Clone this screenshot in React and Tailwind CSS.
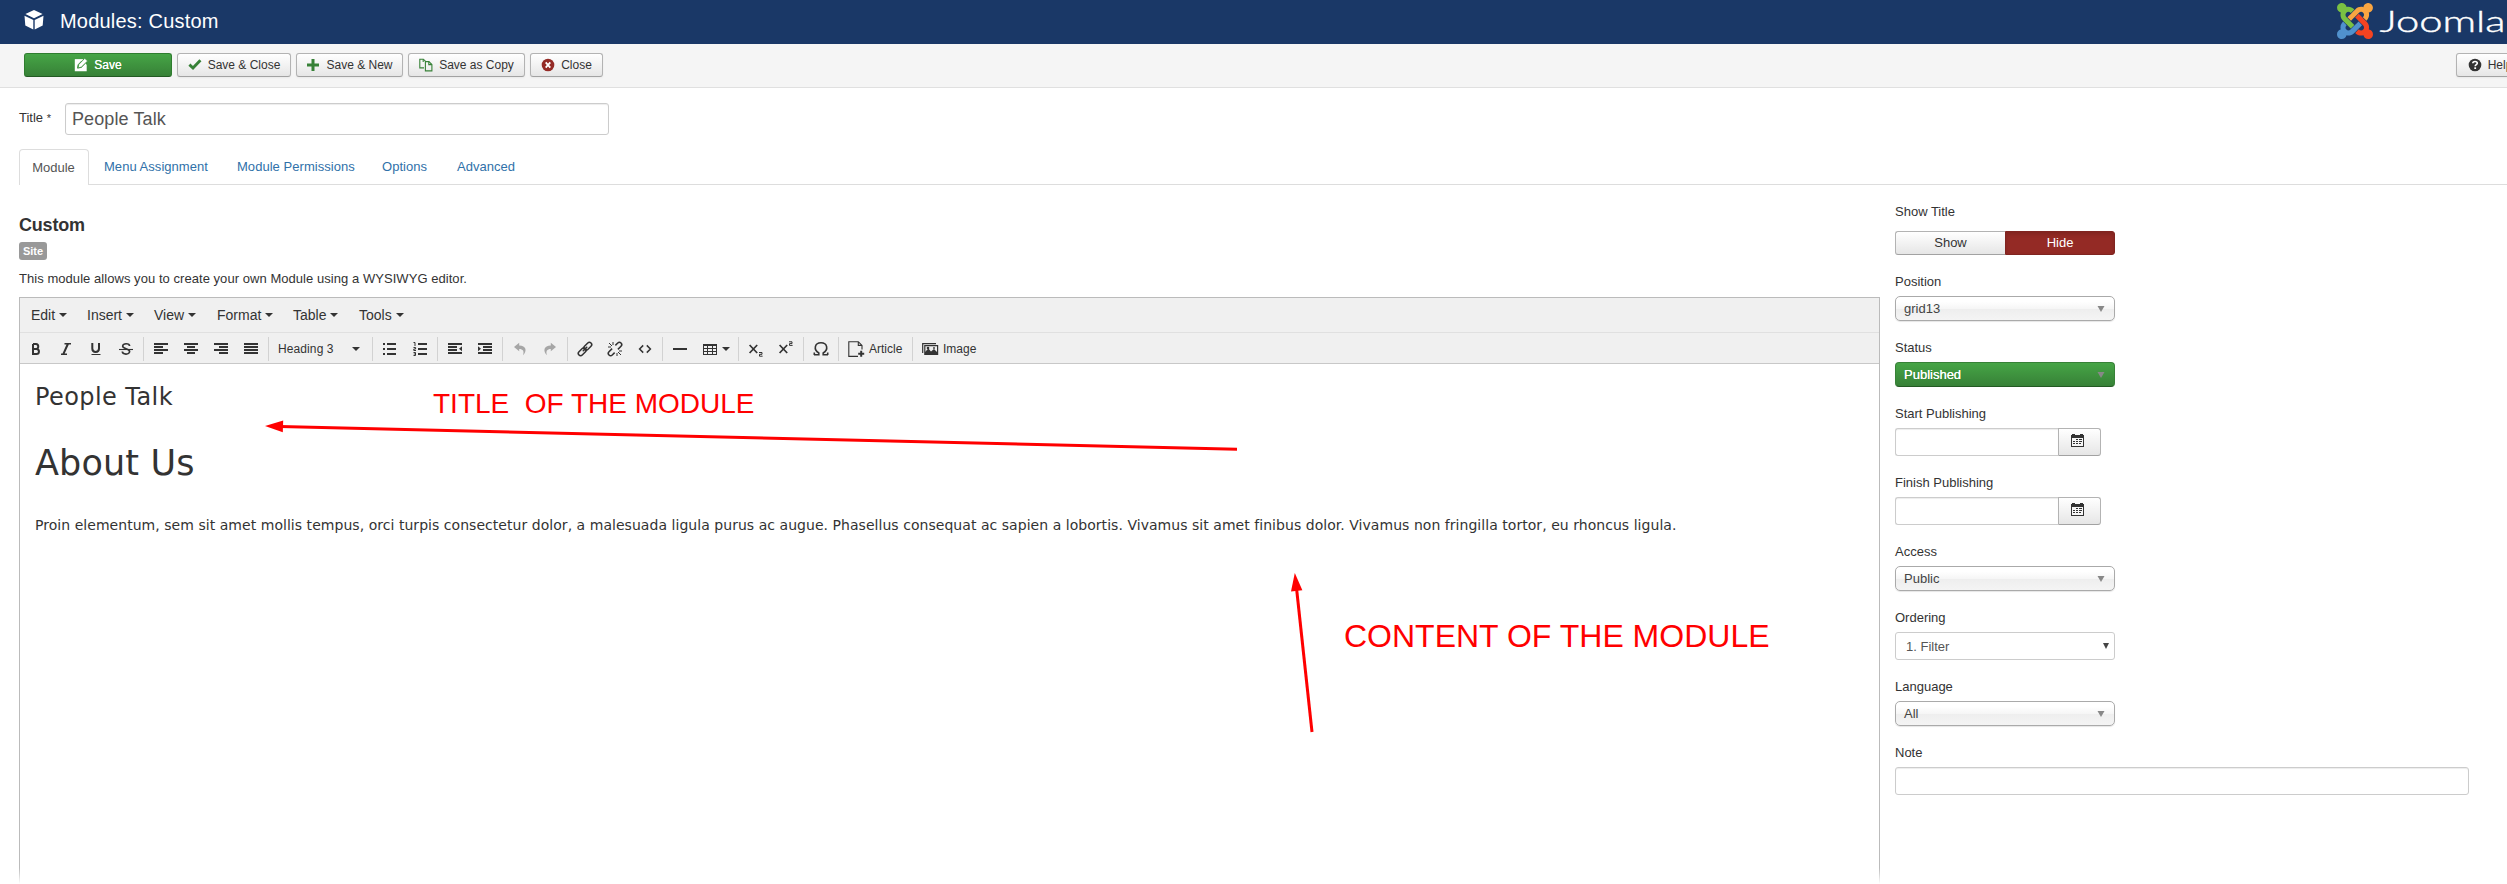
import React from "react";

/* ---------- icons ---------- */

const Cube = () => (
  <svg width="20" height="20" viewBox="0 0 20 20" fill="#fff">
    <path d="M10 0 L18.6 3.9 L10 8.2 L1.4 3.9 Z M0.5 5.8 L9.3 10 V19.6 L1.3 15.6 Z M19.5 5.8 L10.7 10 V19.6 L18.7 15.6 Z" />
  </svg>
);

const JoomlaMark = () => (
  <svg width="36" height="36" viewBox="0 32 448 448">
    <path fill="#7ac143" d="M.6 92.1C.6 58.8 27.4 32 60.4 32c30 0 54.5 21.9 59.2 50.2 32.6-7.6 67.1.6 96.5 30l-44.3 44.3c-20.5-20.5-42.6-16.3-55.4-3.5-14.3 14.3-14.3 37.9 0 52.2l99.5 99.5-44 44.3c-87.7-87.2-49.7-49.7-99.8-99.7-26.8-26.5-35-64.8-24.8-98.9C20.4 144.6.6 120.7.6 92.1z" />
    <path fill="#f9a541" d="M130.1 208.5l44.3 44.3c10-10 89.7-89.7 99.7-99.8 14.3-14.3 37.6-14.3 51.9 0 12.8 12.8 17 35-3.5 55.4l44 44.3c31.2-31.2 38.5-67.6 28.9-101.2 29.2-4.1 51.9-29.2 51.9-59.5 0-33.2-26.8-60.1-59.8-60.1-30.3 0-55.4 22.5-59.5 51.6-33.8-9.9-71.7-1.5-98.3 25.1-18.3 19.1-71.1 71.5-99.6 99.9z" />
    <path fill="#f44321" d="M396.4 360.7c8.2-32.7-.9-68.5-26.3-93.9-11.8-12.2 5 4.7-99.5-99.7l-44.3 44.3 99.7 99.7c14.3 14.3 14.3 37.6 0 51.9-12.8 12.8-35 17-55.4-3.5l-44 44.3c27.6 30.2 68 38.8 102.7 28 5.5 27.4 29.7 48.1 58.9 48.1 33 0 59.8-26.8 59.8-60.1 0-30.2-22.5-55-51.6-59.1z" />
    <path fill="#5091cd" d="M312.1 307.6l-44-44.3c-87 86.4-50.4 50.4-99.7 99.8-14.3 14.3-37.6 14.3-51.9 0-13.1-13.4-16.9-35.3 3.2-55.4l-44-44.3c-30.2 30.2-38 65.2-29.5 98.3-26.7 6-46.2 29.9-46.2 58.2C0 453.2 26.8 480 59.8 480c28.6 0 52.5-19.8 58.6-46.7 32.7 8.2 68.5-.6 94.2-26 32.1-32 12.2-12.4 99.5-99.7z" />
  </svg>
);

const SaveIcon = () => (
  <svg width="14" height="14" viewBox="0 0 14 14">
    <path fill="none" stroke="#fff" strokeWidth="1.4" d="M9 2 H1.5 V12.5 H12 V6.5" />
    <path fill="#fff" d="M1 1.6 H8.6 L3.6 6.8 L3 10.6 L7 10 L12 5 V13 H1 Z" />
    <path fill="#fff" stroke="#3e933e" strokeWidth="0.8" d="M10.8 0.3 L13.6 3 L7.4 9.1 L4.1 9.9 L4.8 6.4 Z" />
  </svg>
);

const CheckIcon = () => (
  <svg width="14" height="14" viewBox="0 0 14 14">
    <path d="M1.4 6.6 L5 10 L12.4 2.2" fill="none" stroke="#378137" strokeWidth="2.9" />
  </svg>
);

const PlusIcon = () => (
  <svg width="14" height="14" viewBox="0 0 14 14">
    <path d="M7 1 V13 M1 7 H13" stroke="#378137" strokeWidth="3" />
  </svg>
);

const CopyIcon = () => (
  <svg width="14" height="14" viewBox="0 0 14 14" fill="none" stroke="#378137" strokeWidth="1.1">
    <path d="M5 9.9 H0.8 V1.2 H4.4 L6.6 3.4" />
    <path d="M4.2 1.2 V4 M9.8 3.6 V6.6 H12.9" />
    <path d="M6.4 3.6 H9.9 L12.9 6.6 V12.9 H6.4 Z" />
  </svg>
);

const CancelIcon = () => (
  <svg width="14" height="14" viewBox="0 0 14 14">
    <circle cx="7" cy="7" r="6.3" fill="#942a25" />
    <path d="M4.7 4.4 L9.3 9.6 M9.3 4.4 L4.7 9.6" stroke="#fff" strokeWidth="1.8" />
  </svg>
);

const HelpIcon = () => (
  <svg width="14" height="14" viewBox="0 0 14 14">
    <circle cx="7" cy="7" r="6.3" fill="#333" />
    <path d="M4.8 5.3 C4.8 2.9 9.3 2.9 9.3 5.3 C9.3 6.7 7.2 6.6 7.2 8.3" fill="none" stroke="#fff" strokeWidth="1.6" />
    <rect x="6.3" y="9.3" width="1.8" height="1.7" fill="#fff" />
  </svg>
);

const CalendarIcon = () => (
  <svg width="13" height="13" viewBox="0 0 13 13" shapeRendering="crispEdges">
    <path fill="#333" d="M0 1 H1 V0 H4 V1 H9 V0 H12 V1 H13 V13 H0 Z" />
    <path fill="#f6f6f6" d="M1 4 H12 V12 H1 Z" />
    <path fill="#333" d="M5 5h2v1H5z M8 5h2v1H8z M10 5h1v1h-1z M2 7h2v1H2z M5 7h2v1H5z M8 7h3v1H8z M2 9h2v1H2z M5 9h2v1H5z M8 9h2v1H8z" />
  </svg>
);

const Caret = () => (
  <svg width="8" height="4" viewBox="0 0 8 4" className="shrink-0">
    <path d="M0 0 H8 L4 4 Z" fill="#333" />
  </svg>
);

const ico = {
  bold: (
    <path fill="none" stroke="#333" strokeWidth="2" d="M5 3 V13 H8.4 C11.8 13 11.8 8 8.4 8 H5 M5 3 H8 C11 3 11 8 8 8" />
  ),
  italic: <path fill="none" stroke="#333" strokeWidth="1.4" d="M6.5 2.7 H13 M3 13.3 H9 M10.4 2.7 L5.6 13.3 M9.6 2.7 L4.9 13.3" />,
  underline: (
    <g fill="none" stroke="#333">
      <path strokeWidth="2" d="M4.3 2 V7.6 C4.3 12.2 11 12.2 11 7.6 V2" />
      <path strokeWidth="1" d="M3.5 13.5 H12.5" />
    </g>
  ),
  strike: (
    <g fill="none" stroke="#333">
      <path strokeWidth="1.7" d="M11.6 5 C11.4 2 4.6 2 4.7 5.2 C4.8 8 11.5 7.4 11.6 10.4 C11.7 13.8 4.6 14 4.3 10.5" />
      <path strokeWidth="1.1" d="M1 8.5 H15" />
    </g>
  ),
  left: <path fill="#333" d="M1 2h14v2H1z M1 5h9v2H1z M1 8h14v2H1z M1 11h9v2H1z" />,
  center: <path fill="#333" d="M1 2h14v2H1z M4 5h8v2H4z M1 8h14v2H1z M4 11h8v2H4z" />,
  right: <path fill="#333" d="M1 2h14v2H1z M6 5h9v2H6z M1 8h14v2H1z M6 11h9v2H6z" />,
  full: <path fill="#333" d="M1 2h14v2H1z M1 5h14v2H1z M1 8h14v2H1z M1 11h14v2H1z" />,
  ul: <path fill="#333" d="M5 2h9v2H5z M5 7h9v2H5z M5 12h9v2H5z M1 2h2v2H1z M1 7h2v2H1z M1 12h2v2H1z" />,
  ol: (
    <g>
      <path fill="#333" d="M6 2h9v2H6z M6 7h9v2H6z M6 12h9v2H6z" />
      <path fill="none" stroke="#333" strokeWidth="1" d="M1.5 1.5 H3 V5 M1.5 6.5 H3.6 V8 H1.8 V9.5 H4 M1.5 11.5 H3.5 V14.5 H1.5 M1.8 13 H3.5" />
    </g>
  ),
  outdent: <path fill="#333" d="M1 2h14v2H1z M1 5h9v2H1z M1 8h9v2H1z M1 11h14v2H1z M15 5.2v5L12 7.7z" />,
  indent: <path fill="#333" d="M1 2h14v2H1z M6 5h9v2H6z M6 8h9v2H6z M1 11h14v2H1z M1 5.2v5L4 7.7z" />,
  undo: <path fill="#a6a6a6" d="M2 6 L7.2 1.8 V4.4 C14.2 4.4 15.4 10 11 14.2 C12.4 10 11 7.9 7.2 7.9 V10.3 Z" />,
  redo: <path fill="#a6a6a6" d="M14 6 L8.8 1.8 V4.4 C1.8 4.4 0.6 10 5 14.2 C3.6 10 5 7.9 8.8 7.9 V10.3 Z" />,
  link: (
    <g fill="none" stroke="#333" strokeWidth="1.5" transform="rotate(-45 8 8)">
      <rect x="-0.5" y="5.7" width="9.2" height="4.6" rx="2.3" />
      <rect x="7.3" y="5.7" width="9.2" height="4.6" rx="2.3" />
      <path d="M4.8 8 H11.2" strokeWidth="1.2" />
    </g>
  ),
  unlink: (
    <g fill="none" stroke="#333" strokeWidth="1.5">
      <g transform="rotate(-45 8 8)">
        <path d="M6.2 5.7 H1.8 A2.3 2.3 0 0 0 1.8 10.3 H5.2 M9.8 10.3 H14.2 A2.3 2.3 0 0 0 14.2 5.7 H10.8" />
      </g>
      <path strokeWidth="1" d="M2 2 L5 5 M6 1 V4 M1 6 H4 M14 14 L11 11 M10 15 V12 M15 10 H12" />
    </g>
  ),
  code: <path fill="none" stroke="#333" strokeWidth="1.5" d="M6.2 4.4 L2.6 8 L6.2 11.6 M9.8 4.4 L13.4 8 L9.8 11.6" />,
  hr: <path fill="#333" d="M1 7h14v2H1z" />,
  table: (
    <path fill="#333" fillRule="evenodd" d="M1 3h14v11H1z M2 5v2h3V5z M6 5v2h4V5z M11 5v2h3V5z M2 8v2h3V8z M6 8v2h4V8z M11 8v2h3V8z M2 11v2h3v-2z M6 11v2h4v-2z M11 11v2h3v-2z" />
  ),
  sub: (
    <g fill="none" stroke="#333">
      <path strokeWidth="1.7" d="M1.6 4 L9.2 12 M9.2 4 L1.6 12" />
      <path strokeWidth="1" d="M11 11.5 H14 V13.3 H11.5 V15.2 H14.6" />
    </g>
  ),
  sup: (
    <g fill="none" stroke="#333">
      <path strokeWidth="1.7" d="M1.6 4 L9.2 12 M9.2 4 L1.6 12" />
      <path strokeWidth="1" d="M11 0.8 H14 V2.6 H11.5 V4.4 H14.6" />
    </g>
  ),
  omega: (
    <path fill="none" stroke="#333" strokeWidth="1.6" d="M1 13.8 H5.8 V12 C0.2 8.8 1.6 1.7 8 1.7 C14.4 1.7 15.8 8.8 10.2 12 V13.8 H15 M1.3 14 V11.5 M14.7 14 V11.5" />
  ),
  article: (
    <g>
      <path fill="none" stroke="#333" strokeWidth="1.1" d="M10 15.4 H0.8 V0.7 H10.3 L14 4.4 V8.6 M10.3 0.7 V4.4 H14" />
      <path stroke="#333" strokeWidth="2" d="M13.2 9.8 V15.8 M10.2 12.8 H16.2" />
    </g>
  ),
  image: (
    <g>
      <path fill="none" stroke="#333" strokeWidth="1.2" d="M0.7 12 V2.7 H14" />
      <path fill="none" stroke="#333" strokeWidth="1.2" d="M2.8 4.7 H15.6 V13.5 H2.8 Z" />
      <path fill="#333" d="M3 13.5 V11 L6.4 7.6 L9 10.4 L12 8 L15.5 11.4 V13.5 Z" />
      <circle cx="6" cy="7" r="1.3" fill="#333" />
      <circle cx="12" cy="7" r="0.9" fill="#333" />
    </g>
  ),
};

const Ico = ({ name }) => (
  <svg width="16" height="16" viewBox="0 0 16 16" className="shrink-0 overflow-visible">
    {ico[name]}
  </svg>
);

/* ---------- toolbar pieces ---------- */

const ToolButton = ({ icon, label, className }) => (
  <button
    className={
      "box-border flex h-6 items-center justify-center rounded-[3px] border border-[#b3b3b3] border-b-[#a2a2a2] bg-linear-to-b from-white to-[#e6e6e6] text-[12px] leading-none text-[#333] shadow-[0_1px_2px_rgba(0,0,0,0.05)] " +
      className
    }
  >
    {icon}
    <span className="ml-[6px] whitespace-nowrap">{label}</span>
  </button>
);

const Sep = () => <div className="mx-[2px] h-6 w-px shrink-0 bg-[#d2d2d2]" />;

const Btn = ({ name }) => (
  <div className="flex w-[30px] shrink-0 justify-center">
    <Ico name={name} />
  </div>
);

/* ---------- sidebar pieces ---------- */

const Field = ({ label, children }) => (
  <div className="mb-[18px]">
    <div className="mb-[5px] h-[18px] text-[13px] leading-[18px]">{label}</div>
    {children}
  </div>
);

const Chosen = ({ value }) => (
  <div className="flex h-[25px] w-[220px] items-center justify-between rounded-[5px] border border-[#aaa] bg-[linear-gradient(#fff_20%,#f6f6f6_50%,#eee_52%,#f4f4f4_100%)] pr-[9px] pl-2 text-[13px] text-[#444] shadow-[0_1px_1px_rgba(0,0,0,0.1)]">
    <span>{value}</span>
    <svg width="8" height="6" viewBox="0 0 8 6">
      <path d="M0.5 0 H7.5 L4 6 Z" fill="#888" />
    </svg>
  </div>
);

const DateInput = () => (
  <div className="flex h-7 w-[206px]">
    <div className="h-7 w-[163px] rounded-l-[3px] border border-r-0 border-[#ccc] bg-white shadow-[inset_0_1px_1px_rgba(0,0,0,0.075)]" />
    <div className="flex h-7 w-[43px] justify-center rounded-r-[3px] border border-[#b3b3b3] border-b-[#a2a2a2] bg-linear-to-b from-white to-[#e6e6e6] pt-[5px] pr-[5px]">
      <CalendarIcon />
    </div>
  </div>
);

const menus = [
  ["Edit", "w-[56px]"],
  ["Insert", "w-[67px]"],
  ["View", "w-[63px]"],
  ["Format", "w-[76px]"],
  ["Table", "w-[66px]"],
  ["Tools", "w-[60px]"],
];

const tabs = [
  ["Menu Assignment", "w-[133px]"],
  ["Module Permissions", "w-[145px]"],
  ["Options", "w-[75px]"],
  ["Advanced", "w-[80px]"],
];

export default function App() {
  return (
    <div className="relative flex h-[884px] w-[2507px] flex-col overflow-hidden bg-white font-['Liberation_Sans',Arial,sans-serif] text-[13px] text-[#333]">
      <header className="flex h-11 shrink-0 items-center justify-between bg-[#1a3867] pl-6">
        <div className="flex items-center">
          <div className="-mt-[5px]">
            <Cube />
          </div>
          <h1 className="-mt-[3px] ml-4 text-[20px] leading-none tracking-[0.2px] text-white">Modules: Custom</h1>
        </div>
        <div className="-mt-[2px] flex w-[170px] shrink-0 items-center">
          <JoomlaMark />
          <svg width="134" height="36" viewBox="0 0 134 36" className="shrink-0">
            <text x="6.5" y="29" fill="#fff" fontFamily="Lato, sans-serif" fontWeight="300" fontSize="30" textLength="126" lengthAdjust="spacingAndGlyphs" stroke="#fff" strokeWidth="0.4">
              Joomla
            </text>
          </svg>
        </div>
      </header>

      <div className="flex h-11 shrink-0 items-start justify-between border-b border-[#e0e0e0] bg-[#f5f5f5] pt-[9px] pl-6">
        <div className="flex gap-[5px]">
          <button className="flex h-6 w-[148px] items-center justify-center rounded-[3px] border border-[#2f7d2f] border-b-[#235a23] bg-linear-to-b from-[#46a546] to-[#378137] text-[12px] leading-none text-white">
            <SaveIcon />
            <span className="ml-[6px] [text-shadow:0_0_0.6px_#fff]">Save</span>
          </button>
          <ToolButton className="w-[114px]" icon={<CheckIcon />} label="Save & Close" />
          <ToolButton className="w-[107px]" icon={<PlusIcon />} label="Save & New" />
          <ToolButton className="w-[117px]" icon={<CopyIcon />} label="Save as Copy" />
          <ToolButton className="w-[73px]" icon={<CancelIcon />} label="Close" />
        </div>
        <ToolButton className="-mr-[17px] w-[68px] shrink-0" icon={<HelpIcon />} label="Help" />
      </div>

      <div className="flex h-[61px] shrink-0 items-start pt-[15px] pl-[19px]">
        <div className="w-[46px] pt-[6px] leading-[18px]">
          Title <span className="text-[11px]">*</span>
        </div>
        <div className="flex h-8 w-[544px] items-center rounded-[3px] border border-[#ccc] pl-[6px] text-[18px] tracking-[0.1px] text-[#555] shadow-[inset_0_1px_1px_rgba(0,0,0,0.075)]">
          People Talk
        </div>
      </div>

      <nav className="ml-[19px] flex h-9 shrink-0 border-b border-[#ddd]">
        <div className="-mb-px flex h-9 w-[70px] items-center justify-center rounded-t-[4px] border border-b-0 border-[#ddd] bg-white pr-px text-[#555]">
          Module
        </div>
        <div className="flex items-center pl-[15px] tracking-[0.04px] text-[#3071a9]">
          {tabs.map(([t, w]) => (
            <div key={t} className={"whitespace-nowrap " + w}>
              {t}
            </div>
          ))}
        </div>
      </nav>

      <div className="flex min-h-0 flex-1">
        <main className="ml-[19px] flex w-[1861px] shrink-0 flex-col">
          <h3 className="mt-[31px] h-[18px] text-[18px] leading-[18px] font-bold tracking-[-0.2px]">Custom</h3>
          <div className="mt-2 h-[18px] w-7 rounded-[3px] bg-[#999] text-center text-[11px] leading-[18px] font-bold text-white">Site</div>
          <p className="mt-[10px] h-[18px] leading-[18px] tracking-[0.05px]">This module allows you to create your own Module using a WYSIWYG editor.</p>

          <div className="mt-[9px] flex min-h-0 flex-1 flex-col border-x border-t border-[#bbb]">
            <div className="flex h-[35px] shrink-0 items-center border-b border-[#e0e0e0] bg-[#f0f0f0] pl-[11px] text-[14px]">
              {menus.map(([m, w]) => (
                <div key={m} className={"flex items-center gap-1 " + w}>
                  {m}
                  <Caret />
                </div>
              ))}
            </div>
            <div className="flex h-[31px] shrink-0 items-center border-b border-[#c8c8c8] bg-[#f0f0f0] pt-px pl-px">
              <Btn name="bold" />
              <Btn name="italic" />
              <Btn name="underline" />
              <Btn name="strike" />
              <Sep />
              <Btn name="left" />
              <Btn name="center" />
              <Btn name="right" />
              <Btn name="full" />
              <Sep />
              <div className="flex w-[99px] shrink-0 items-center justify-between pr-[10px] pl-[7px] text-[12px] tracking-[0.1px]">
                Heading 3
                <Caret />
              </div>
              <Sep />
              <Btn name="ul" />
              <Btn name="ol" />
              <Sep />
              <Btn name="outdent" />
              <Btn name="indent" />
              <Sep />
              <Btn name="undo" />
              <Btn name="redo" />
              <Sep />
              <Btn name="link" />
              <Btn name="unlink" />
              <Btn name="code" />
              <Sep />
              <Btn name="hr" />
              <div className="flex w-[41px] shrink-0 items-center gap-1 pl-[7px]">
                <Ico name="table" />
                <Caret />
              </div>
              <Sep />
              <Btn name="sub" />
              <Btn name="sup" />
              <Sep />
              <Btn name="omega" />
              <Sep />
              <div className="flex w-[69px] shrink-0 items-center gap-[5px] pl-[7px] text-[12px]">
                <Ico name="article" />
                Article
              </div>
              <Sep />
              <div className="flex shrink-0 items-center gap-[5px] pl-[7px] text-[12px]">
                <Ico name="image" />
                Image
              </div>
            </div>
            <div className="flex-1 pl-[15px] font-['DejaVu_Sans',Verdana,sans-serif]">
              <h3 className="mt-[18px] h-[30px] text-[24px] leading-[30px] tracking-[0.42px]">People Talk</h3>
              <h1 className="mt-[29px] h-[44px] text-[35px] leading-[44px] tracking-[0.15px]">About Us</h1>
              <p className="mt-[30px] h-5 text-[14px] leading-5 tracking-[0.042px] whitespace-nowrap">
                Proin elementum, sem sit amet mollis tempus, orci turpis consectetur dolor, a malesuada ligula purus ac augue. Phasellus consequat ac sapien a lobortis. Vivamus sit amet finibus dolor. Vivamus non fringilla tortor, eu rhoncus ligula.
              </p>
            </div>
          </div>
        </main>

        <aside className="ml-[15px] w-[574px] shrink-0 pt-[18px]">
          <div className="mb-[18px]">
            <div className="mb-[10px] h-[18px] leading-[18px]">Show Title</div>
            <div className="flex h-6 w-[220px]">
              <div className="flex w-[110px] items-center justify-center rounded-l-[3px] border border-r-0 border-[#b3b3b3] border-b-[#a2a2a2] bg-linear-to-b from-white to-[#e6e6e6]">
                Show
              </div>
              <div className="flex w-[110px] items-center justify-center rounded-r-[3px] border border-[#802420] bg-[#942a25] text-white shadow-[inset_0_2px_4px_rgba(0,0,0,0.15)]">
                Hide
              </div>
            </div>
          </div>
          <Field label="Position">
            <Chosen value="grid13" />
          </Field>
          <Field label="Status">
            <div className="flex h-[25px] w-[220px] items-center justify-between rounded-[4px] border border-[#378137] border-b-[#235a23] bg-linear-to-b from-[#46a546] to-[#378137] pr-[9px] pl-2 text-[13px] text-white">
              <span className="[text-shadow:0_0_0.6px_#fff]">Published</span>
              <svg width="8" height="6" viewBox="0 0 8 6">
                <path d="M0.5 0 H7.5 L4 6 Z" fill="#888" />
              </svg>
            </div>
          </Field>
          <Field label="Start Publishing">
            <DateInput />
          </Field>
          <Field label="Finish Publishing">
            <DateInput />
          </Field>
          <Field label="Access">
            <Chosen value="Public" />
          </Field>
          <Field label="Ordering">
            <div className="flex h-7 w-[220px] items-center justify-between rounded-[3px] border border-[#ccc] bg-white pr-[5px] pl-[10px] text-[#555]">
              <span className="pt-px">1. Filter</span>
              <svg width="6" height="6" viewBox="0 0 6 6">
                <path d="M0 0 H6 L3 6 Z" fill="#444" />
              </svg>
            </div>
          </Field>
          <Field label="Language">
            <Chosen value="All" />
          </Field>
          <Field label="Note">
            <div className="h-7 w-[574px] rounded-[3px] border border-[#ccc] bg-white shadow-[inset_0_1px_1px_rgba(0,0,0,0.075)]" />
          </Field>
        </aside>
      </div>

      {/* annotations drawn over the page */}
      <svg className="pointer-events-none absolute top-0 left-0" width="2507" height="884" viewBox="0 0 2507 884">
        <path d="M280 426.6 L1237 449.2" stroke="#f00" strokeWidth="3" />
        <path d="M265 426 L283.2 420.6 L282.8 432.2 Z" fill="#f00" />
        <path d="M1296.5 588 L1312 732" stroke="#f00" strokeWidth="3" />
        <path d="M1294.8 573 L1302.4 590.2 L1291 591.6 Z" fill="#f00" />
      </svg>
      <div className="absolute top-[388px] left-[433px] text-[28px] leading-8 whitespace-pre text-[#f00]">TITLE  OF THE MODULE</div>
      <div className="absolute top-[618px] left-[1344px] text-[32px] leading-9 whitespace-pre text-[#f00]">CONTENT OF THE MODULE</div>
      <div className="absolute bottom-0 left-0 h-4 w-full bg-linear-to-b from-white/0 to-white" />
    </div>
  );
}
